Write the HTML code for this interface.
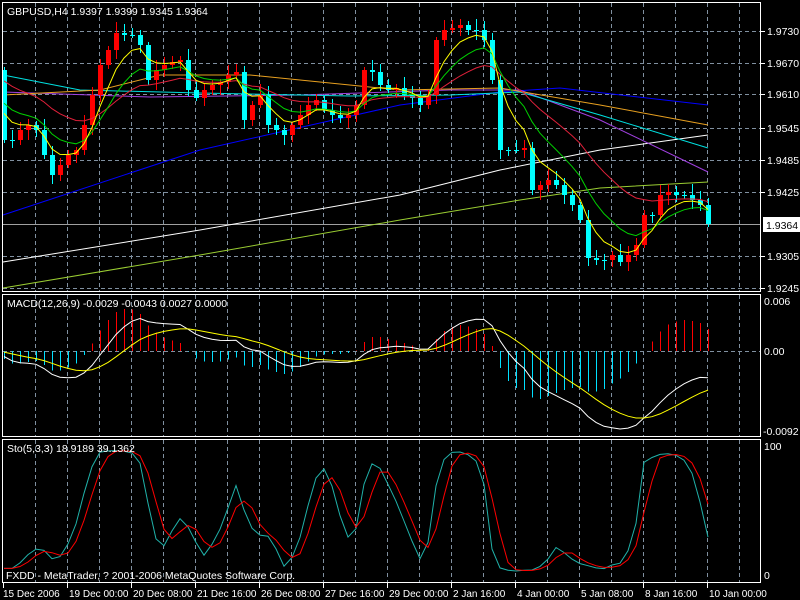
<!DOCTYPE html>
<html><head><meta charset="utf-8">
<style>
html,body{margin:0;padding:0;background:#000;width:800px;height:600px;overflow:hidden}
svg{display:block}
text{font-family:"Liberation Sans",sans-serif;font-size:10.5px;fill:#fff}
text.t{font-size:10px}
</style></head><body>
<svg id="s" width="800" height="600" xmlns="http://www.w3.org/2000/svg" shape-rendering="crispEdges">
<rect width="800" height="600" fill="#000"/>
<g id="grid" stroke="#8090a0" stroke-dasharray="4,3" stroke-width="1"></g>
<g id="plot"></g>
<g fill="none" stroke="#fff" stroke-width="1">
<rect x="2.5" y="2.5" width="758" height="289"/>
<rect x="2.5" y="294.5" width="758" height="142"/>
<rect x="2.5" y="439.5" width="758" height="143"/>
</g>
<text x="7" y="15">GBPUSD,H4  1.9397 1.9399 1.9345 1.9364</text>
<text x="7" y="307">MACD(12,26,9) -0.0029 -0.0043 0.0027 0.0000</text>
<text x="7" y="452">Sto(5,3,3) 18.9189 39.1362</text>
<text x="6" y="579">FXDD - MetaTrader, ? 2001-2006 MetaQuotes Software Corp.</text>
<g id="axis"></g>
</svg>
<script>
(function(){
var NS="http://www.w3.org/2000/svg";
function el(p,t,a){var e=document.createElementNS(NS,t);for(var k in a)e.setAttribute(k,a[k]);document.getElementById(p).appendChild(e);return e;}
function txt(x,y,s,c){var e=el("axis","text",{x:x,y:y});if(c)e.setAttribute("class",c);e.textContent=s;}
for(var gx=35;gx<760;gx+=32){el("grid","line",{x1:gx+.5,y1:3,x2:gx+.5,y2:291});el("grid","line",{x1:gx+.5,y1:295,x2:gx+.5,y2:436});el("grid","line",{x1:gx+.5,y1:440,x2:gx+.5,y2:582});}
[31,63,94,128,160,192,256,288].forEach(function(y){el("grid","line",{x1:3,y1:y+.5,x2:760,y2:y+.5});});
el("grid","line",{x1:3,y1:351.5,x2:760,y2:351.5});
el("plot","line",{x1:3,y1:224.5,x2:760,y2:224.5,stroke:"#a0a0a0"});
var pl=[[31,"1.9730"],[63,"1.9670"],[94,"1.9610"],[128,"1.9545"],[160,"1.9485"],[192,"1.9425"],[256,"1.9305"],[288,"1.9245"]];
pl.forEach(function(p){el("axis","line",{x1:761,y1:p[0]+.5,x2:765,y2:p[0]+.5,stroke:"#fff"});txt(767,p[0]+4,p[1]);});
el("axis","rect",{x:763,y:217,width:37,height:15,fill:"#fff"});
var t=el("axis","text",{x:766,y:229,style:"fill:#000"});t.textContent="1.9364";
txt(764,305,"0.006");txt(764,355,"0.00");txt(763,435,"-0.0092");txt(764,450,"100");txt(764,579,"0");
var tl=["15 Dec 2006","19 Dec 00:00","20 Dec 08:00","21 Dec 16:00","26 Dec 08:00","27 Dec 16:00","29 Dec 00:00","2 Jan 16:00","4 Jan 00:00","5 Jan 08:00","8 Jan 16:00","10 Jan 00:00"];
for(var i=0;i<tl.length;i++){var lx=3+64*i;el("axis","line",{x1:lx+.5,y1:583,x2:lx+.5,y2:588,stroke:"#fff"});txt(lx+(i==0?0:2),597,tl[i],"t");}
var C=[140,140,130,125,130,155,175,165,155,150,125,95,65,50,33,35,35,45,80,70,65,62,60,90,98,90,85,82,75,72,120,105,95,125,130,135,125,115,105,100,110,115,118,115,105,70,72,85,90,88,95,98,105,95,40,30,28,25,30,30,40,80,150,150,150,148,190,185,180,185,195,205,220,258,260,260,255,262,255,245,215,215,195,192,195,195,200,205,224];
var n=C.length,X=function(i){return 4+8*i;};
var O=[70].concat(C.slice(0,n-1));
function ema(a,p,seed){var k=2/(p+1),r=[],v=seed;for(var i=0;i<a.length;i++){v=v+k*(a[i]-v);r.push(v);}return r;}
function poly(g,pts,col){el(g,"polyline",{points:pts.map(function(p){return p[0]+","+p[1].toFixed(1)}).join(" "),fill:"none",stroke:col,"stroke-width":1,"shape-rendering":"auto"});}
poly("plot",[[3,288],[200,255],[400,220],[520,200],[600,188],[708,182]],"#9acd32");
poly("plot",[[3,262],[200,230],[400,195],[500,170],[600,150],[708,135]],"#ffffff");
poly("plot",[[3,215],[200,150],[400,105],[500,92],[560,88],[708,105]],"#0000ff");
poly("plot",[[3,92],[150,97],[300,95],[450,90],[520,90],[600,120],[708,172]],"#a040e0");
poly("plot",[[3,75],[80,90],[200,93],[350,96],[450,95],[520,92],[600,115],[708,148]],"#00e0e0");
poly("plot",[[3,95],[100,90],[160,75],[250,75],[400,90],[500,88],[600,105],[708,125]],"#e8a020");
for(var i=0;i<n;i++){var o=O[i],c=C[i],hi=Math.min(o,c)-3-(i*7%9),lo=Math.max(o,c)+3+(i*5%8);var x=X(i);
var col=c<o?"#ff0000":"#00ffff";
el("plot","line",{x1:x+.5,y1:hi,x2:x+.5,y2:lo,stroke:col});
var bt=Math.min(o,c),bh=Math.max(1,Math.abs(o-c));
el("plot","rect",{x:x-2,y:bt,width:5,height:bh,fill:col});}
var red=ema(C,21,75),grn=ema(C,10,95),yel=ema(C,5,100);
poly("plot",red.map(function(v,i){return[X(i),v]}),"#e0203a");
poly("plot",grn.map(function(v,i){return[X(i),v]}),"#00d000");
poly("plot",yel.map(function(v,i){return[X(i),v]}),"#ffff00");
var neg=C.map(function(v){return -v;});
var e12=ema(neg,12,-100),e26=ema(neg,26,-100);
var m=e12.map(function(v,i){return v-e26[i];});
var sig=ema(m,9,0);
var mn=0;m.forEach(function(v){mn=Math.min(mn,v);});
var ks=78/(-mn);
var hs=[];for(var i=0;i<n;i++)hs.push(m[i]-sig[i]);
var hmx=0;hs.forEach(function(v){hmx=Math.max(hmx,Math.abs(v));});
for(var i=0;i<n;i++){var hv=hs[i]*48/hmx;var x=X(i)+.5;
el("plot","line",{x1:x,y1:351,x2:x,y2:351-hv,stroke:hv>0?"#ff0000":"#00e0ff"});}
poly("plot",m.map(function(v,i){return[X(i),Math.min(430,351-v*ks)]}),"#ffffff");
poly("plot",sig.map(function(v,i){return[X(i),Math.min(430,351-v*ks)]}),"#ffff00");
var H=[],L=[];for(var i=0;i<n;i++){H.push(-Math.min(O[i],C[i])+4);L.push(-Math.max(O[i],C[i])-4);}
var raw=[];for(var i=0;i<n;i++){var hh=-1e9,ll=1e9;for(var j=Math.max(0,i-4);j<=i;j++){hh=Math.max(hh,H[j]);ll=Math.min(ll,L[j]);}raw.push([-C[i]-ll,hh-ll]);}
var K=[];for(var i=0;i<n;i++){var a=0,b=0;for(var j=Math.max(0,i-2);j<=i;j++){a+=raw[j][0];b+=raw[j][1];}K.push(b?100*a/b:50);}
var D=[];for(var i=0;i<n;i++){var s=0,c2=0;for(var j=Math.max(0,i-2);j<=i;j++){s+=K[j];c2++;}D.push(s/c2);}
var sy=function(v){return 575-v*1.29;};
poly("plot",K.map(function(v,i){return[X(i),sy(v)]}),"#20b2aa");
poly("plot",D.map(function(v,i){return[X(i),sy(v)]}),"#ff0000");
})();
</script>
</body></html>
